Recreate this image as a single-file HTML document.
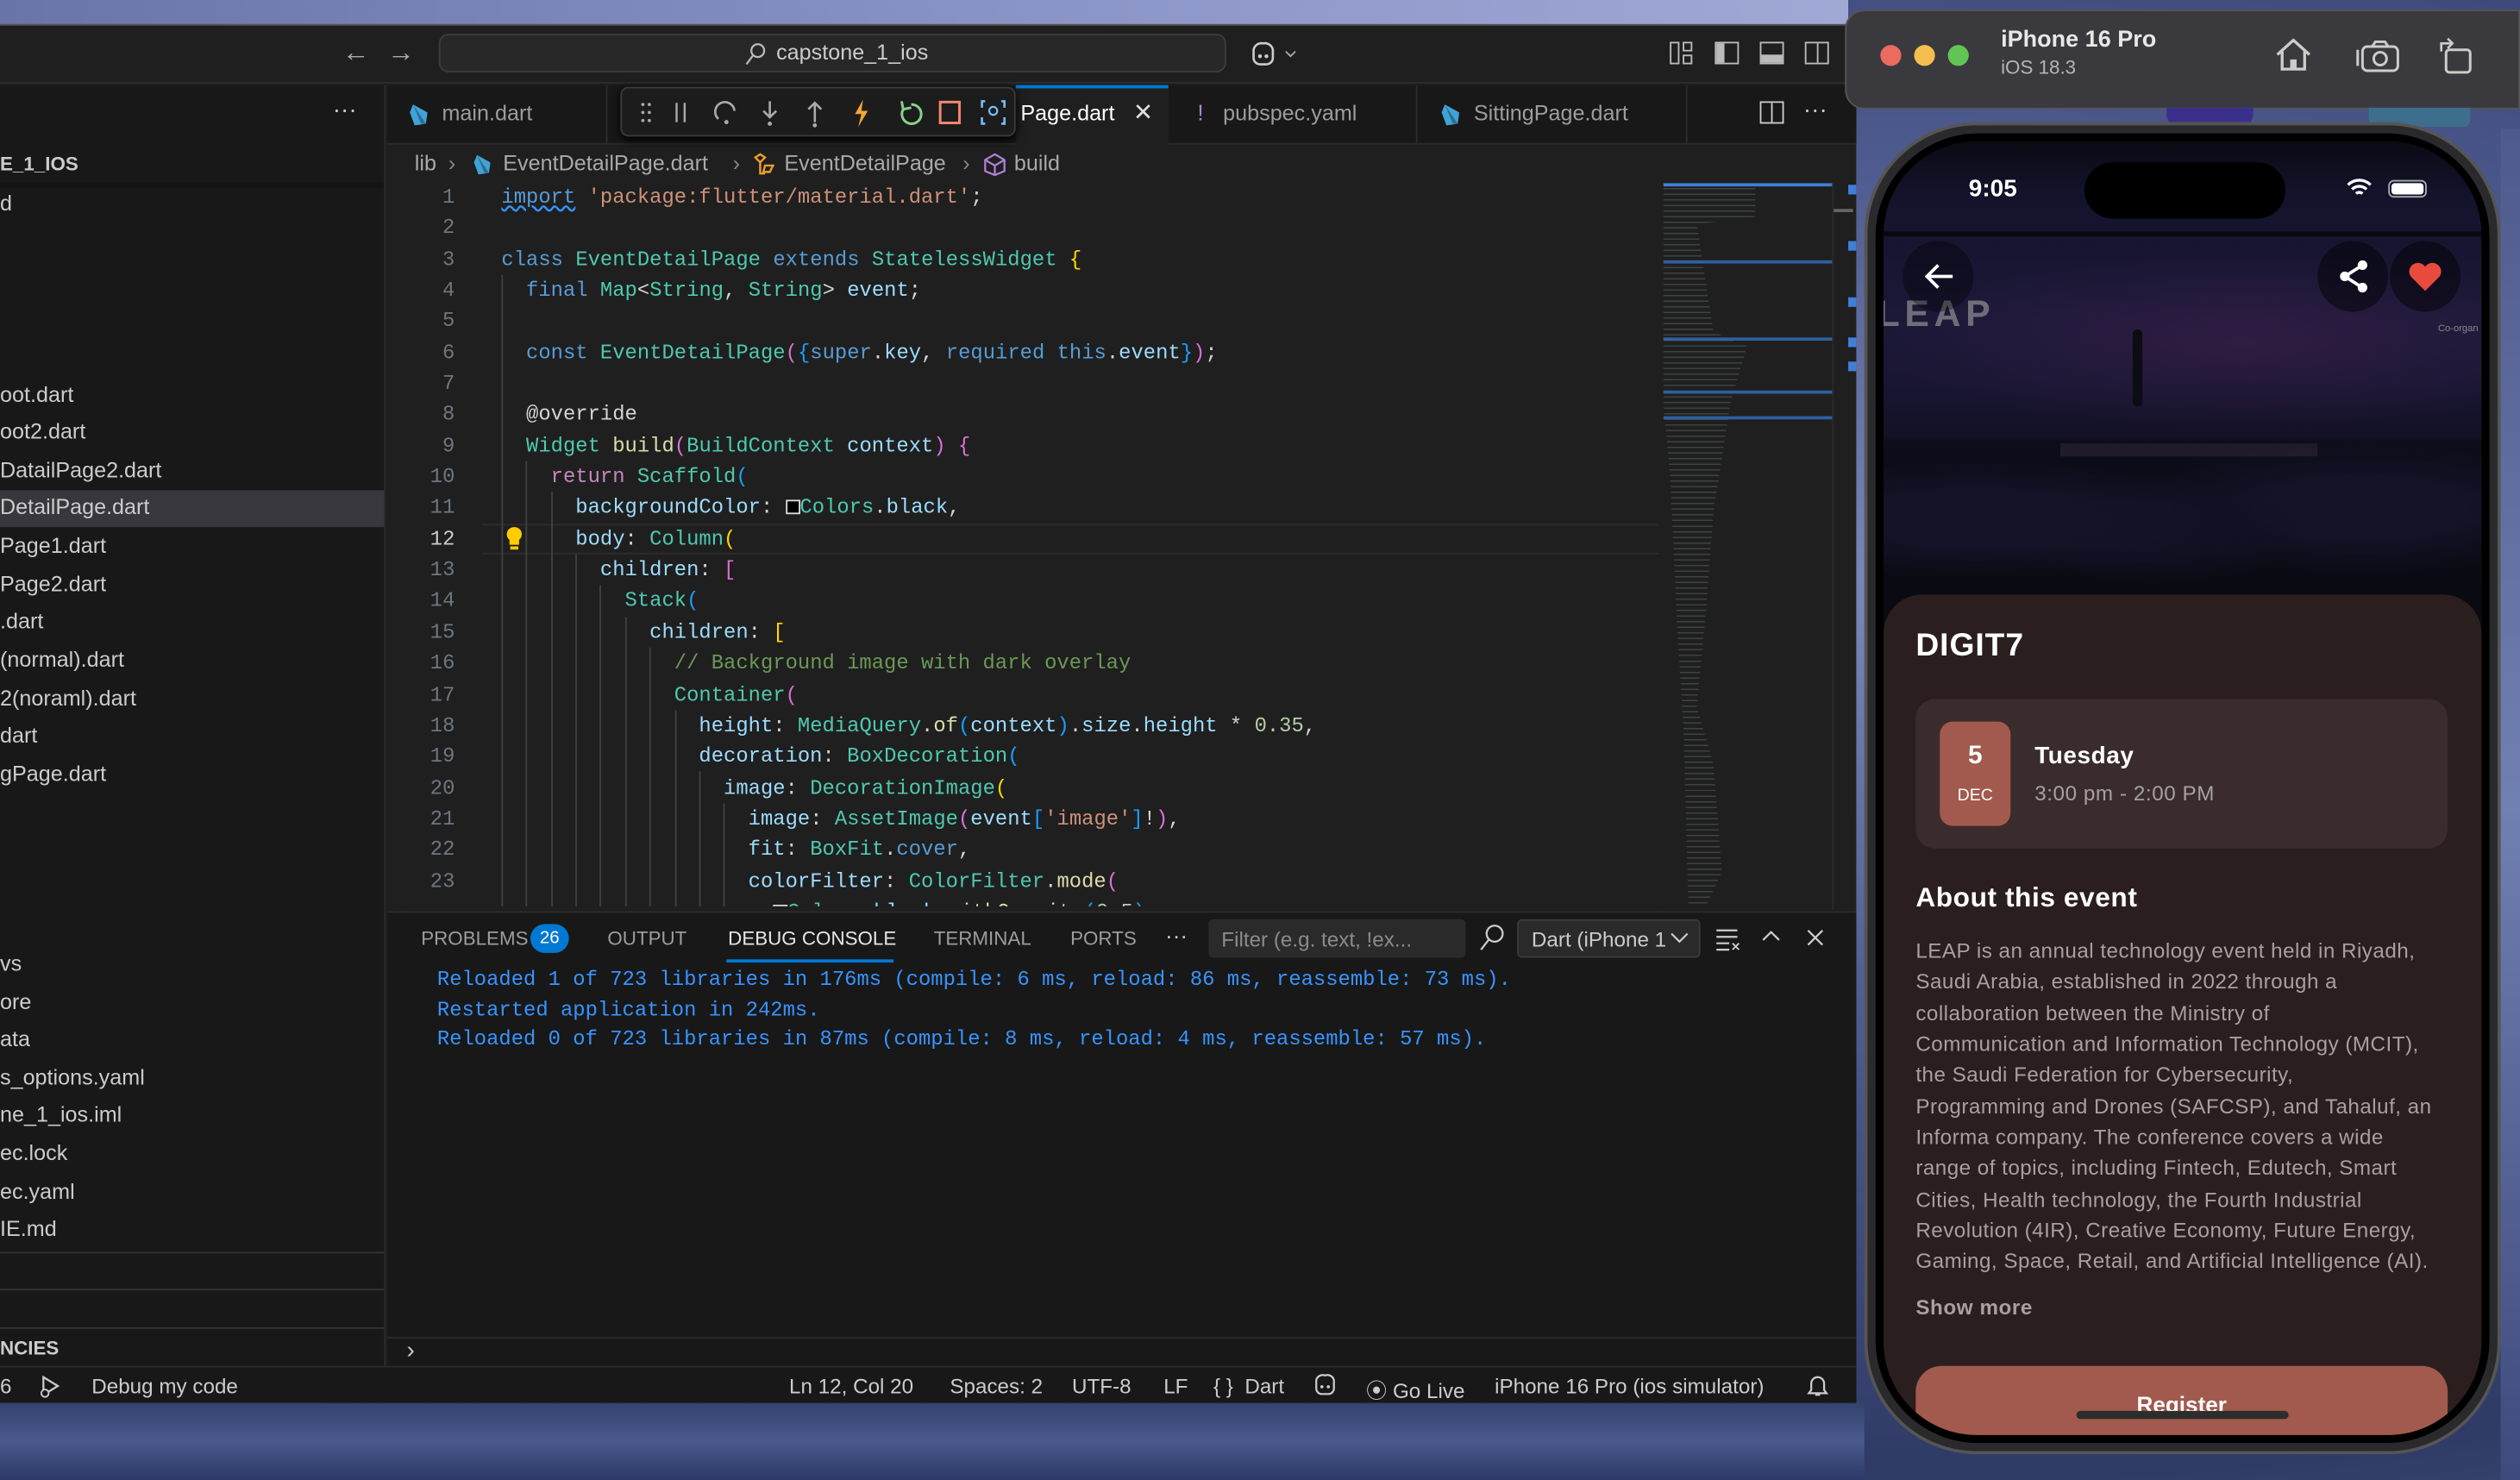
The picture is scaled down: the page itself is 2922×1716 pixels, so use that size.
<!DOCTYPE html>
<html><head><meta charset="utf-8">
<style>
*{margin:0;padding:0;box-sizing:border-box}
html,body{width:2922px;height:1716px;overflow:hidden;background:#4a5688}
#r{position:absolute;left:0;top:0;width:1568px;height:921px;transform:scale(1.86352,1.86319);transform-origin:0 0;font-family:"Liberation Sans",sans-serif;overflow:hidden;
background:radial-gradient(ellipse at 75% 40%,#7a86b8 0%,#4d5a8e 35%,#2f3a66 70%,#5a6698 100%)}
.a{position:absolute}
.t{position:absolute;white-space:pre;color:#cccccc;font-size:13.5px}
.code{font-family:"Liberation Mono",monospace;font-size:12.8px;white-space:pre;position:absolute;left:312px;color:#9cdcfe;line-height:19.35px}
.ln{font-family:"Liberation Mono",monospace;font-size:12.8px;position:absolute;left:250px;width:33px;text-align:right;color:#6e7681;line-height:19.35px}
.k{color:#569cd6}.c{color:#4ec9b0}.s{color:#ce9178}.f{color:#dcdcaa}.p{color:#c586c0}.m{color:#6a9955}.n{color:#b5cea8}.w{color:#d4d4d4}
.b1{color:#ffd700}.b2{color:#da70d6}.b3{color:#179fff}
.side{font-size:13.5px;color:#cccccc;position:absolute;left:0;white-space:pre}
.ig{position:absolute;width:1px;background:#404040}
.sb{position:absolute;top:855px;font-size:13px;color:#cccccc;white-space:pre}
</style></head><body><div id="r">
<div class="a" style="left:0;top:0;width:1150px;height:15px;background:linear-gradient(90deg,#6a74a6,#8d96c8 60%,#a0a8d6)"></div>
<div class="a" style="left:0;top:873px;width:1160px;height:48px;background:linear-gradient(180deg,#34426e,#4a5a8c 50%,#2c3866)"></div>

<div class="a" style="left:0;top:15px;width:1155px;height:858px;background:#1f1f1f;border-top:1px solid #555"></div>
<div class="a" style="left:0;top:16px;width:1155px;height:36px;background:#1f1f1f;border-bottom:1px solid #2b2b2b"></div>
<div class="t" style="left:213px;top:23px;font-size:17px;color:#aaa">←</div>
<div class="t" style="left:241px;top:23px;font-size:17px;color:#aaa">→</div>
<div class="a" style="left:273px;top:21px;width:490px;height:24px;background:#282828;border:1px solid #3c3c3c;border-radius:6px"></div>
<svg class="a" style="left:463px;top:26px" width="14" height="15" viewBox="0 0 14 15"><circle cx="8.5" cy="5.5" r="4" fill="none" stroke="#bbb" stroke-width="1.2"/><path d="M5.5 8.5 L1.5 14" stroke="#bbb" stroke-width="1.2"/></svg>
<div class="t" style="left:483px;top:25px;font-size:13.5px;color:#cccccc">capstone_1_ios</div>
<svg class="a" style="left:777px;top:25px" width="32" height="16" viewBox="0 0 32 16"><path d="M3 6a5 5 0 0 1 6-4a5 5 0 0 1 6 4v5a4 4 0 0 1-4 4H7a4 4 0 0 1-4-4z" fill="none" stroke="#ccc" stroke-width="1.4"/><circle cx="7" cy="10" r="1.2" fill="#ccc"/><circle cx="11" cy="10" r="1.2" fill="#ccc"/><path d="M23 7l3 3 3-3" fill="none" stroke="#aaa" stroke-width="1"/></svg>
<svg class="a" style="left:1038px;top:24px" width="110" height="18" viewBox="0 0 110 18"><rect x="1.5" y="2.5" width="5" height="13" fill="none" stroke="#bbb"/><rect x="9.5" y="2.5" width="5" height="5" fill="none" stroke="#bbb"/><rect x="9.5" y="10.5" width="5" height="5" fill="none" stroke="#bbb"/><rect x="29.5" y="2.5" width="14" height="13" fill="none" stroke="#bbb"/><rect x="30" y="3" width="5" height="12" fill="#bbb"/><rect x="57.5" y="2.5" width="14" height="13" fill="none" stroke="#bbb"/><rect x="58" y="10" width="13" height="5" fill="#bbb"/><rect x="85.5" y="2.5" width="14" height="13" fill="none" stroke="#bbb"/><path d="M93 3v12" stroke="#bbb"/></svg>

<div class="a" style="left:0;top:53px;width:240px;height:797px;background:#181818;border-right:1px solid #2b2b2b"></div>
<div class="t" style="left:207px;top:60px;color:#ccc;font-size:15px">···</div>
<div class="t" style="left:0;top:95px;font-size:12px;font-weight:bold;color:#ccc">E_1_IOS</div>
<div class="a" style="left:0;top:114px;width:239px;height:3px;background:#141414"></div>
<div class="side" style="top:119px">d</div>
<div class="a" style="left:0;top:305px;width:239px;height:23px;background:#37373d"></div>
<div class="side" style="top:238px">oot.dart</div>
<div class="side" style="top:261px">oot2.dart</div>
<div class="side" style="top:285px">DatailPage2.dart</div>
<div class="side" style="top:308px">DetailPage.dart</div>
<div class="side" style="top:332px">Page1.dart</div>
<div class="side" style="top:356px">Page2.dart</div>
<div class="side" style="top:379px">.dart</div>
<div class="side" style="top:403px">(normal).dart</div>
<div class="side" style="top:427px">2(noraml).dart</div>
<div class="side" style="top:450px">dart</div>
<div class="side" style="top:474px">gPage.dart</div>
<div class="side" style="top:592px">vs</div>
<div class="side" style="top:616px">ore</div>
<div class="side" style="top:639px">ata</div>
<div class="side" style="top:663px">s_options.yaml</div>
<div class="side" style="top:686px">ne_1_ios.iml</div>
<div class="side" style="top:710px">ec.lock</div>
<div class="side" style="top:734px">ec.yaml</div>
<div class="side" style="top:757px">IE.md</div>
<div class="a" style="left:0;top:779px;width:239px;height:1px;background:#333"></div>
<div class="a" style="left:0;top:802px;width:239px;height:1px;background:#333"></div>
<div class="a" style="left:0;top:826px;width:239px;height:1px;background:#333"></div>
<div class="t" style="left:0;top:832px;font-size:12px;font-weight:bold;color:#ccc">NCIES</div>

<div class="a" style="left:241px;top:53px;width:914px;height:37px;background:#181818;border-bottom:1px solid #2b2b2b"></div>
<div class="a" style="left:241px;top:53px;width:137px;height:37px;border-right:1px solid #2b2b2b"></div>
<svg class="a" style="left:254px;top:64px" width="14" height="15" viewBox="0 0 14 15"><path d="M3 1L12 6 11 13 4 14 1 6Z" fill="#40a3d6"/><path d="M3 1L8 13 11 13" fill="#2b6e95"/></svg>
<div class="t" style="left:275px;top:63px;color:#9d9d9d">main.dart</div>
<div class="a" style="left:632px;top:53px;width:95px;height:37px;background:#1f1f1f;border-top:2px solid #0078d4"></div>
<div class="t" style="left:635px;top:63px;color:#ffffff">Page.dart</div>
<div class="t" style="left:705px;top:61px;color:#ddd;font-size:15px">✕</div>
<div class="a" style="left:727px;top:53px;width:155px;height:37px;border-right:1px solid #2b2b2b"></div>
<div class="t" style="left:745px;top:62px;color:#b180d7;font-size:14px">!</div>
<div class="t" style="left:761px;top:63px;color:#9d9d9d">pubspec.yaml</div>
<div class="a" style="left:882px;top:53px;width:168px;height:37px;border-right:1px solid #2b2b2b"></div>
<svg class="a" style="left:896px;top:64px" width="14" height="15" viewBox="0 0 14 15"><path d="M3 1L12 6 11 13 4 14 1 6Z" fill="#40a3d6"/><path d="M3 1L8 13 11 13" fill="#2b6e95"/></svg>
<div class="t" style="left:917px;top:63px;color:#9d9d9d">SittingPage.dart</div>
<svg class="a" style="left:1095px;top:63px" width="15" height="14"><rect x="0.5" y="0.5" width="14" height="13" fill="none" stroke="#ccc"/><path d="M7.5 1v12" stroke="#ccc"/></svg>
<div class="t" style="left:1122px;top:60px;color:#ccc;font-size:15px">···</div>
<div class="a" style="left:386px;top:54px;width:246px;height:31px;background:#1c1c1c;border:1px solid #3a3a3a;border-radius:5px;box-shadow:0 2px 6px #000"></div>
<svg class="a" style="left:395px;top:60px" width="232" height="20" viewBox="0 0 232 20">
<g fill="#aaa"><circle cx="5" cy="5" r="1"/><circle cx="9" cy="5" r="1"/><circle cx="5" cy="10" r="1"/><circle cx="9" cy="10" r="1"/><circle cx="5" cy="15" r="1"/><circle cx="9" cy="15" r="1"/></g>
<path d="M26 4v12M31 4v12" stroke="#aaa" stroke-width="1.3"/>
<path d="M52 14a6 6 0 1 1 10-5" fill="none" stroke="#aaa" stroke-width="1.4"/><circle cx="57" cy="16" r="1.3" fill="#aaa"/>
<path d="M84 3v10M80 9l4 4 4-4" fill="none" stroke="#aaa" stroke-width="1.4"/><circle cx="84" cy="17" r="1.3" fill="#aaa"/>
<path d="M112 16V4M108 8l4-4 4 4" fill="none" stroke="#aaa" stroke-width="1.4"/><circle cx="112" cy="18" r="1.3" fill="#aaa"/>
<path d="M142 2l-5 9h4l-2 8 6-10h-4z" fill="#f0a732"/>
<path d="M172 5a6 6 0 1 1-5 3" fill="none" stroke="#89d185" stroke-width="1.6"/><path d="M166 3l1 5 5-1" fill="none" stroke="#89d185" stroke-width="1.6"/>
<rect x="190" y="3.5" width="12" height="13" fill="none" stroke="#f48771" stroke-width="1.6"/>
<path d="M218 3h-2v4M228 3h2v4M218 17h-2v-4M228 17h2v-4" fill="none" stroke="#75beff" stroke-width="1.4"/><circle cx="223" cy="9" r="2.5" fill="none" stroke="#75beff" stroke-width="1.2"/>
</svg>

<div class="t" style="left:258px;top:94px;font-size:13.5px;color:#a9a9a9">lib</div>
<div class="t" style="left:279px;top:94px;color:#888">›</div>
<svg class="a" style="left:294px;top:95px" width="13" height="15" viewBox="0 0 14 15"><path d="M3 1L12 6 11 13 4 14 1 6Z" fill="#40a3d6"/><path d="M3 1L8 13 11 13" fill="#2b6e95"/></svg>
<div class="t" style="left:313px;top:94px;color:#a9a9a9">EventDetailPage.dart</div>
<div class="t" style="left:456px;top:94px;color:#888">›</div>
<svg class="a" style="left:468px;top:95px" width="16" height="15" viewBox="0 0 16 15"><path d="M2 3l3-2 3 2-3 3zM8 8h5l-2 4H7zM5 6v7h3" fill="none" stroke="#ee9d28" stroke-width="1.3"/></svg>
<div class="t" style="left:488px;top:94px;color:#a9a9a9">EventDetailPage</div>
<div class="t" style="left:599px;top:94px;color:#888">›</div>
<svg class="a" style="left:612px;top:95px" width="14" height="15" viewBox="0 0 14 15"><path d="M7 1l6 3.5v7L7 14 1 11.5v-7zM1 4.5L7 8l6-3.5M7 8v6" fill="none" stroke="#b180d7" stroke-width="1.2"/></svg>
<div class="t" style="left:631px;top:94px;color:#a9a9a9">build</div>

<div class="a" style="left:300px;top:326px;width:732px;height:19px;border-top:1px solid #2c2c2c;border-bottom:1px solid #2c2c2c"></div>
<div class="ig" style="left:312px;top:171px;height:395px"></div>
<div class="ig" style="left:327px;top:287px;height:279px"></div>
<div class="ig" style="left:343px;top:306px;height:260px"></div>
<div class="ig" style="left:358px;top:345px;height:221px"></div>
<div class="ig" style="left:373px;top:364px;height:202px"></div>
<div class="ig" style="left:389px;top:384px;height:182px"></div>
<div class="ig" style="left:404px;top:403px;height:163px"></div>
<div class="ig" style="left:420px;top:442px;height:124px"></div>
<div class="ig" style="left:435px;top:480px;height:86px"></div>
<div class="ig" style="left:450px;top:500px;height:66px"></div>

<div class="ln" style="top:113px">1<br>2<br>3<br>4<br>5<br>6<br>7<br>8<br>9<br>10<br>11<br><span style="color:#ccc">12</span><br>13<br>14<br>15<br>16<br>17<br>18<br>19<br>20<br>21<br>22<br>23</div>
<svg class="a" style="left:314px;top:327px" width="12" height="16" viewBox="0 0 12 16"><path d="M6 1a4.5 4.5 0 0 1 3 8v3H3V9a4.5 4.5 0 0 1 3-8z" fill="#ffcc00"/><rect x="3.5" y="13" width="5" height="2" fill="#ffcc00"/></svg>
<div class="code" style="top:113px"><span class="k" style="text-decoration:underline wavy #3794ff">import</span> <span class="s">'package:flutter/material.dart'</span><span class="w">;</span>

<span class="k">class</span> <span class="c">EventDetailPage</span> <span class="k">extends</span> <span class="c">StatelessWidget</span> <span class="b1">{</span>
  <span class="k">final</span> <span class="c">Map</span><span class="w">&lt;</span><span class="c">String</span><span class="w">,</span> <span class="c">String</span><span class="w">&gt;</span> event<span class="w">;</span>

  <span class="k">const</span> <span class="c">EventDetailPage</span><span class="b2">(</span><span class="b3">{</span><span class="k">super</span><span class="w">.</span>key<span class="w">,</span> <span class="k">required</span> <span class="k">this</span><span class="w">.</span>event<span class="b3">}</span><span class="b2">)</span><span class="w">;</span>

  <span class="w">@override</span>
  <span class="c">Widget</span> <span class="f">build</span><span class="b2">(</span><span class="c">BuildContext</span> context<span class="b2">)</span> <span class="b2">{</span>
    <span class="p">return</span> <span class="c">Scaffold</span><span class="b3">(</span>
      backgroundColor<span class="w">:</span> <span style="display:inline-block;width:9px;height:9px;border:1px solid #ddd;background:#000;vertical-align:-1px"></span><span class="c">Colors</span><span class="w">.</span>black<span class="w">,</span>
      body<span class="w">:</span> <span class="c">Column</span><span class="b1">(</span>
        children<span class="w">:</span> <span class="b2">[</span>
          <span class="c">Stack</span><span class="b3">(</span>
            children<span class="w">:</span> <span class="b1">[</span>
              <span class="m">// Background image with dark overlay</span>
              <span class="c">Container</span><span class="b2">(</span>
                height<span class="w">:</span> <span class="c">MediaQuery</span><span class="w">.</span><span class="f">of</span><span class="b3">(</span>context<span class="b3">)</span><span class="w">.</span>size<span class="w">.</span>height <span class="w">*</span> <span class="n">0.35</span><span class="w">,</span>
                decoration<span class="w">:</span> <span class="c">BoxDecoration</span><span class="b3">(</span>
                  image<span class="w">:</span> <span class="c">DecorationImage</span><span class="b1">(</span>
                    image<span class="w">:</span> <span class="c">AssetImage</span><span class="b2">(</span>event<span class="b3">[</span><span class="s">'image'</span><span class="b3">]</span><span class="w">!</span><span class="b2">)</span><span class="w">,</span>
                    fit<span class="w">:</span> <span class="c">BoxFit</span><span class="w">.</span><span class="k">cover</span><span class="w">,</span>
                    colorFilter<span class="w">:</span> <span class="c">ColorFilter</span><span class="w">.</span><span class="f">mode</span><span class="b2">(</span>
                      <span style="display:inline-block;width:9px;height:9px;border:1px solid #ddd;background:#000;vertical-align:-1px"></span><span class="c">Colors</span><span class="w">.</span>black<span class="w">.</span><span class="f">withOpacity</span><span class="b3">(</span><span class="n">0.5</span><span class="b3">)</span><span class="w">,</span></div>
<div class="a" style="left:250px;top:564px;width:785px;height:4px;background:#1f1f1f"></div>

<!-- minimap -->
<div class="a" style="left:1035px;top:114px;width:105px;height:2px;background:#3f7fd6"></div>
<div class="a" style="left:1035px;top:117px;width:104px;height:448px;opacity:.28;background:repeating-linear-gradient(180deg,#8aa090 0 0.8px,transparent 0.8px 3.5px);clip-path:polygon(0 0,55% 0,55% 4%,20% 5%,30% 20%,50% 22%,40% 30%,30% 45%,25% 60%,20% 72%,30% 80%,35% 95%,25% 100%,15% 100%,12% 75%,8% 60%,4% 40%,0 30%)"></div>
<div class="a" style="left:1035px;top:162px;width:105px;height:2px;background:#2f5f9f"></div>
<div class="a" style="left:1035px;top:210px;width:105px;height:2px;background:#2f5f9f"></div>
<div class="a" style="left:1035px;top:243px;width:105px;height:2px;background:#2f5f9f"></div>
<div class="a" style="left:1035px;top:259px;width:105px;height:2px;background:#2f5f9f"></div>
<div class="a" style="left:1140px;top:114px;width:1px;height:452px;background:#2b2b2b"></div>
<div class="a" style="left:1141px;top:130px;width:12px;height:2px;background:#666"></div>
<div class="a" style="left:1150px;top:115px;width:5px;height:6px;background:#3f7fd6"></div>
<div class="a" style="left:1150px;top:150px;width:5px;height:6px;background:#3f7fd6"></div>
<div class="a" style="left:1150px;top:185px;width:5px;height:6px;background:#3f7fd6"></div>
<div class="a" style="left:1150px;top:210px;width:5px;height:6px;background:#3f7fd6"></div>
<div class="a" style="left:1150px;top:225px;width:5px;height:6px;background:#3f7fd6"></div>

<div class="a" style="left:241px;top:567px;width:914px;height:283px;background:#181818;border-top:1px solid #2b2b2b"></div>
<div class="t" style="left:262px;top:577px;font-size:12px;color:#9d9d9d">PROBLEMS</div>
<div class="a" style="left:330px;top:575px;width:24px;height:18px;border-radius:9px;background:#0078d4;color:#fff;font-size:11px;text-align:center;line-height:18px">26</div>
<div class="t" style="left:378px;top:577px;font-size:12px;color:#9d9d9d">OUTPUT</div>
<div class="t" style="left:453px;top:577px;font-size:12px;color:#e7e7e7">DEBUG CONSOLE</div>
<div class="a" style="left:452px;top:597px;width:104px;height:1.5px;background:#0078d4"></div>
<div class="t" style="left:581px;top:577px;font-size:12px;color:#9d9d9d">TERMINAL</div>
<div class="t" style="left:666px;top:577px;font-size:12px;color:#9d9d9d">PORTS</div>
<div class="t" style="left:725px;top:574px;font-size:14px;color:#ccc">···</div>
<div class="a" style="left:752px;top:572px;width:160px;height:24px;background:#2a2a2a;border-radius:3px"></div>
<div class="t" style="left:760px;top:577px;font-size:13px;color:#8b8b8b">Filter (e.g. text, !ex...</div>
<svg class="a" style="left:920px;top:575px" width="16" height="18" viewBox="0 0 16 18"><circle cx="10" cy="6" r="5" fill="none" stroke="#ccc" stroke-width="1.2"/><path d="M6.5 9.5L1.5 16" stroke="#ccc" stroke-width="1.2"/></svg>
<div class="a" style="left:944px;top:572px;width:114px;height:24px;background:#2a2a2a;border:1px solid #3a3a3a;border-radius:3px;overflow:hidden"></div>
<div class="a" style="left:953px;top:577px;width:84px;overflow:hidden;white-space:pre;font-size:13px;color:#ccc">Dart (iPhone 16</div>
<svg class="a" style="left:1039px;top:580px" width="12" height="8"><path d="M1 1l5 5 5-5" fill="none" stroke="#ccc" stroke-width="1.2"/></svg>
<svg class="a" style="left:1067px;top:576px" width="16" height="16"><path d="M1 3h13M1 7h13M1 11h8M1 15h8" stroke="#ccc" stroke-width="1.2"/><path d="M11 11l4 4M15 11l-4 4" stroke="#ccc"/></svg>
<svg class="a" style="left:1096px;top:578px" width="12" height="8"><path d="M1 7l5-5 5 5" fill="none" stroke="#ccc" stroke-width="1.2"/></svg>
<svg class="a" style="left:1124px;top:578px" width="11" height="11"><path d="M1 1l9 9M10 1l-9 9" stroke="#ccc" stroke-width="1.2"/></svg>
<div class="a" style="left:272px;top:601px;font-family:'Liberation Mono',monospace;font-size:12.8px;color:#3794ff;white-space:pre;line-height:18.5px">Reloaded 1 of 723 libraries in 176ms (compile: 6 ms, reload: 86 ms, reassemble: 73 ms).
Restarted application in 242ms.
Reloaded 0 of 723 libraries in 87ms (compile: 8 ms, reload: 4 ms, reassemble: 57 ms).</div>
<div class="a" style="left:241px;top:832px;width:914px;height:1px;background:#2b2b2b"></div>
<div class="t" style="left:253px;top:832px;font-size:15px;color:#ccc">›</div>

<div class="a" style="left:0;top:850px;width:1155px;height:23px;background:#181818;border-top:1px solid #2b2b2b"></div>
<div class="sb" style="left:0">6</div>
<svg class="a" style="left:24px;top:855px" width="14" height="15" viewBox="0 0 14 15"><path d="M3 2l9 5.5L3 13z" fill="none" stroke="#ccc" stroke-width="1.2"/><circle cx="4" cy="12" r="2.3" fill="#181818" stroke="#ccc"/></svg>
<div class="sb" style="left:57px">Debug my code</div>
<div class="sb" style="left:491px">Ln 12, Col 20</div>
<div class="sb" style="left:591px">Spaces: 2</div>
<div class="sb" style="left:667px">UTF-8</div>
<div class="sb" style="left:724px">LF</div>
<div class="sb" style="left:755px">{ }  Dart</div>
<svg class="a" style="left:817px;top:854px" width="15" height="15" viewBox="0 0 15 15"><path d="M2 5a4 4 0 0 1 5.5-3 4 4 0 0 1 5.5 3v5a3.5 3.5 0 0 1-3.5 3.5h-4A3.5 3.5 0 0 1 2 10z" fill="none" stroke="#ccc" stroke-width="1.2"/><circle cx="5.5" cy="9" r="1" fill="#ccc"/><circle cx="9.5" cy="9" r="1" fill="#ccc"/></svg>
<div class="sb" style="left:850px">⦿ Go Live</div>
<div class="sb" style="left:930px">iPhone 16 Pro (ios simulator)</div>
<svg class="a" style="left:1124px;top:854px" width="14" height="16" viewBox="0 0 14 16"><path d="M3 11V7a4 4 0 0 1 8 0v4l1.5 2h-11z M5.5 14h3" fill="none" stroke="#ccc" stroke-width="1.2"/></svg>

<!-- Simulator -->
<div class="a" style="left:1148px;top:6px;width:420px;height:62px;background:#3a3a3e;border-radius:12px 0 0 12px;border:1px solid #555"></div>
<div class="a" style="left:1170px;top:28px;width:13px;height:13px;border-radius:50%;background:#ed6a5e"></div>
<div class="a" style="left:1191px;top:28px;width:13px;height:13px;border-radius:50%;background:#f5bf4f"></div>
<div class="a" style="left:1212px;top:28px;width:13px;height:13px;border-radius:50%;background:#61c554"></div>
<div class="t" style="left:1245px;top:17px;font-size:14.5px;font-weight:bold;color:#e8e8e8">iPhone 16 Pro</div>
<div class="t" style="left:1245px;top:35px;font-size:12px;color:#b5b5b5">iOS 18.3</div>
<svg class="a" style="left:1414px;top:22px" width="26" height="24" viewBox="0 0 26 24"><path d="M3 12L13 3l10 9M6 10v11h14V10" fill="none" stroke="#ccc" stroke-width="1.8"/><rect x="11" y="15" width="4" height="6" fill="#ccc"/></svg>
<svg class="a" style="left:1466px;top:24px" width="28" height="22" viewBox="0 0 28 22"><rect x="4" y="5" width="22" height="15" rx="3" fill="none" stroke="#ccc" stroke-width="1.6"/><path d="M1 17V7" stroke="#ccc" stroke-width="1.6"/><circle cx="15" cy="12.5" r="4" fill="none" stroke="#ccc" stroke-width="1.6"/><path d="M10 5l2-3h6l2 3" fill="none" stroke="#ccc" stroke-width="1.6"/></svg>
<svg class="a" style="left:1516px;top:22px" width="24" height="26" viewBox="0 0 24 26"><rect x="6" y="9" width="15" height="14" rx="2" fill="none" stroke="#ccc" stroke-width="1.6"/><path d="M3 10V5h6M7 2l3 3-3 3" fill="none" stroke="#ccc" stroke-width="1.4"/></svg>
<div class="a" style="left:1348px;top:67px;width:54px;height:12px;border-radius:0 0 8px 8px;background:#3b2f8c"></div>
<div class="a" style="left:1474px;top:67px;width:63px;height:12px;border-radius:0 0 4px 4px;background:#3d6e8d"></div>

<div class="a" style="left:1160px;top:76px;width:396px;height:829px;border-radius:70px;background:#2a2a2c;border:2px solid #555"></div>
<div class="a" style="left:1167px;top:83px;width:382px;height:815px;border-radius:64px;background:#000"></div>
<div class="a" style="left:1172px;top:88px;width:372px;height:805px;border-radius:58px;overflow:hidden;background:#2b1e1e">
  <div class="a" style="left:0;top:0;width:372px;height:310px;background:linear-gradient(180deg,#0a0a14 0%,#12132a 10%,#171531 22%,#1c1838 35%,#191633 48%,#111022 62%,#0b0b14 100%)"></div>
  <div class="a" style="left:0;top:70px;width:372px;height:110px;background:radial-gradient(ellipse at 60% 50%,rgba(70,35,80,.45),transparent 70%)"></div>
  <div class="a" style="left:0;top:56px;width:372px;height:3px;background:#08080f"></div>
  <div class="a" style="left:0;top:185px;width:372px;height:125px;background:radial-gradient(ellipse at 15% 40%,#141328 15%,transparent 35%),radial-gradient(ellipse at 45% 45%,#121124 15%,transparent 35%),radial-gradient(ellipse at 80% 35%,#141328 15%,transparent 35%),linear-gradient(180deg,rgba(8,8,16,.4),#0a0a12)"></div>
  <div class="a" style="left:110px;top:188px;width:160px;height:8px;background:#2a2232;opacity:.7"></div>
  <div class="a" style="left:155px;top:117px;width:6px;height:48px;background:#0c0c14;border-radius:3px"></div>
  <div class="t" style="left:-4px;top:94px;font-size:23px;font-weight:bold;letter-spacing:3px;color:#6e6d78">LEAP</div>
  <div class="t" style="left:53px;top:21px;font-size:15px;font-weight:bold;color:#fff">9:05</div>
  <div class="a" style="left:125px;top:13px;width:125px;height:35px;border-radius:18px;background:#000"></div>
  <svg class="a" style="left:288px;top:23px" width="16" height="12" viewBox="0 0 16 12"><path d="M1 4a10 10 0 0 1 14 0M3.5 6.8a6.5 6.5 0 0 1 9 0M6 9.5a3 3 0 0 1 4 0" fill="none" stroke="#fff" stroke-width="1.8"/></svg>
  <div class="a" style="left:314px;top:24px;width:24px;height:11px;border-radius:3.5px;border:1px solid #aaa;padding:1px"><div style="width:100%;height:100%;background:#fff;border-radius:2px"></div></div>
  <div class="a" style="left:12px;top:62px;width:44px;height:44px;border-radius:50%;background:rgba(0,0,0,.35)"></div>
  <svg class="a" style="left:25px;top:75px" width="20" height="18" viewBox="0 0 20 18"><path d="M18 9H3M9 2L2 9l7 7" fill="none" stroke="#fff" stroke-width="2"/></svg>
  <div class="a" style="left:270px;top:62px;width:44px;height:44px;border-radius:50%;background:rgba(0,0,0,.45)"></div>
  <svg class="a" style="left:283px;top:73px" width="20" height="22" viewBox="0 0 20 22"><circle cx="15" cy="4" r="3" fill="#fff"/><circle cx="4" cy="11" r="3" fill="#fff"/><circle cx="15" cy="18" r="3" fill="#fff"/><path d="M15 4L4 11l11 7" fill="none" stroke="#fff" stroke-width="2"/></svg>
  <div class="a" style="left:315px;top:62px;width:44px;height:44px;border-radius:50%;background:rgba(0,0,0,.45)"></div>
  <svg class="a" style="left:326px;top:74px" width="22" height="20" viewBox="0 0 22 20"><path d="M11 19L2 10A5 5 0 0 1 11 4a5 5 0 0 1 9 6z" fill="#e84b3c"/></svg>
  <div class="t" style="left:345px;top:114px;font-size:6px;color:#888">Co-organ</div>
  <div class="a" style="left:0;top:282px;width:372px;height:560px;background:#2b1e1e;border-radius:24px 24px 0 0"></div>
  <div class="t" style="left:20px;top:303px;font-size:20px;font-weight:bold;color:#fff;letter-spacing:.5px">DIGIT7</div>
  <div class="a" style="left:20px;top:347px;width:331px;height:93px;background:#3a2c2c;border-radius:12px"></div>
  <div class="a" style="left:35px;top:361px;width:44px;height:65px;background:#a15a4d;border-radius:8px"></div>
  <div class="t" style="left:35px;top:374px;width:44px;text-align:center;font-size:16px;font-weight:bold;color:#fff">5</div>
  <div class="t" style="left:35px;top:401px;width:44px;text-align:center;font-size:10.5px;color:#fff">DEC</div>
  <div class="t" style="left:94px;top:374px;font-size:15px;font-weight:bold;color:#fff;letter-spacing:.3px">Tuesday</div>
  <div class="t" style="left:94px;top:398px;font-size:13px;color:#a8a0a0;letter-spacing:.3px">3:00 pm - 2:00 PM</div>
  <div class="t" style="left:20px;top:461px;font-size:17px;font-weight:bold;color:#fff;letter-spacing:.3px">About this event</div>
  <div class="a" style="left:20px;top:494px;width:340px;font-size:13px;line-height:19.35px;color:#a8a0a0;letter-spacing:.25px;white-space:pre">LEAP is an annual technology event held in Riyadh,
Saudi Arabia, established in 2022 through a
collaboration between the Ministry of
Communication and Information Technology (MCIT),
the Saudi Federation for Cybersecurity,
Programming and Drones (SAFCSP), and Tahaluf, an
Informa company. The conference covers a wide
range of topics, including Fintech, Edutech, Smart
Cities, Health technology, the Fourth Industrial
Revolution (4IR), Creative Economy, Future Energy,
Gaming, Space, Retail, and Artificial Intelligence (AI).</div>
  <div class="t" style="left:20px;top:718px;font-size:13px;font-weight:bold;color:#a8a0a0;letter-spacing:.3px">Show more</div>
  <div class="a" style="left:20px;top:762px;width:331px;height:60px;background:#a15a4d;border-radius:16px"></div>
  <div class="t" style="left:20px;top:778px;width:331px;text-align:center;font-size:14px;font-weight:bold;color:#fff">Register</div>
  <div class="a" style="left:120px;top:790px;width:132px;height:5px;border-radius:3px;background:#2d2d2d"></div>
</div>
<div class="a" style="left:1556px;top:80px;width:12px;height:841px;background:linear-gradient(180deg,#4e5a8c,#7080b0 50%,#3e4a7c)"></div>
</div></body></html>
